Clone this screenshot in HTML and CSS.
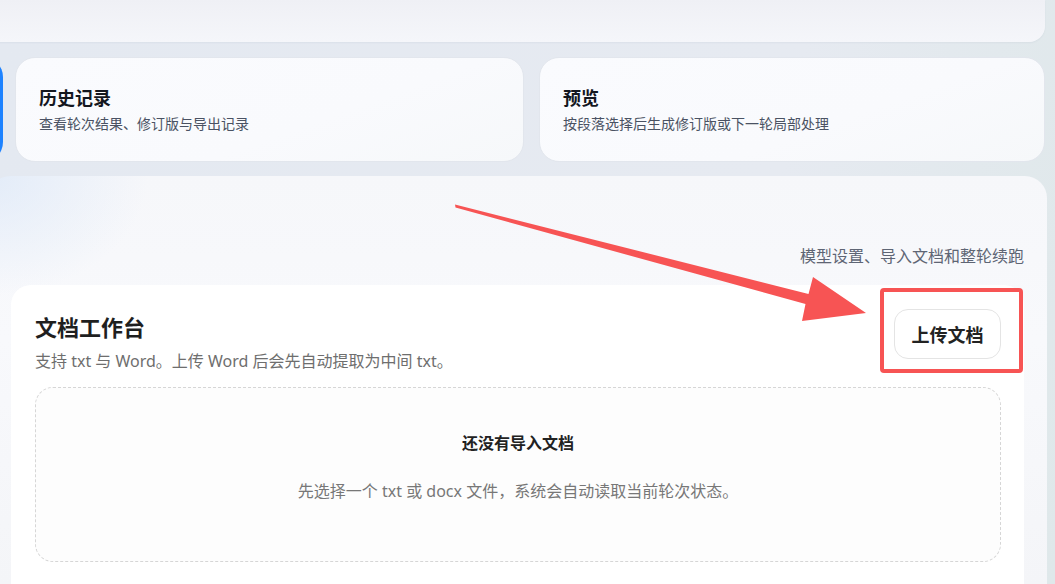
FILE: index.html
```html
<!DOCTYPE html>
<html lang="zh-CN">
<head>
    <meta charset="utf-8">
    <title>文档工作台</title>
    <link rel="stylesheet" href="styles.css">
</head>
<body>
    <div class="page">
        <div class="topbar"></div>

        <div class="tabs">
            <div class="tab tab-active"></div>
            <div class="tab">
                <h3>历史记录</h3>
                <p>查看轮次结果、修订版与导出记录</p>
            </div>
            <div class="tab">
                <h3>预览</h3>
                <p>按段落选择后生成修订版或下一轮局部处理</p>
            </div>
        </div>

        <section class="panel">
            <div class="panel-note">模型设置、导入文档和整轮续跑</div>
            <div class="workbench">
                <div class="wb-head">
                    <div class="wb-title">
                        <h2>文档工作台</h2>
                        <p>支持 txt 与 Word。上传 Word 后会先自动提取为中间 txt。</p>
                    </div>
                    <button class="upload" type="button">上传文档</button>
                </div>
                <div class="empty">
                    <h4>还没有导入文档</h4>
                    <p>先选择一个 txt 或 docx 文件，系统会自动读取当前轮次状态。</p>
                </div>
            </div>
        </section>
    </div>

    <!-- annotation layer: arrow + box around the upload button -->
    <svg class="markup" width="1055" height="584" viewBox="0 0 1055 584">
        <polygon fill="#f75454" points="455,204.5 808.5,294 813,277 866,313 802,321 805.5,304 455.5,207.5"/>
        <rect x="882" y="290" width="139" height="81" rx="2" fill="none" stroke="#f75454" stroke-width="4"/>
    </svg>
</body>
</html>
```

FILE: styles.css
```css
body {
    margin: 0;
    height: 584px;
    overflow: hidden;
    position: relative;
    font-family: "Noto Sans", "Noto Sans CJK SC", sans-serif;
    color: #1d1f24;
    background: linear-gradient(100deg, #e4e9f1 0%, #e6eaf1 70%, #dfe8ea 100%);
}

.page {
    display: flex;
    flex-direction: column;
    height: 584px;
}

.topbar {
    height: 42px;
    margin: 0 10px 0 -20px;
    border-radius: 0 0 16px 16px;
    background: linear-gradient(180deg, #eff0f5 0%, #f5f6fa 100%);
    box-shadow: 0 1px 2px rgba(40, 60, 90, 0.05);
}

.tabs {
    display: flex;
    gap: 15px;
    height: 105px;
    margin: 15px 10px 0 0;
}

.tab {
    box-sizing: border-box;
    width: 509px;
    flex: none;
    padding: 27px 23px 0;
    border-radius: 20px;
    border: 1px solid #e2e6ed;
    background: linear-gradient(160deg, #fafbfe 0%, #f9fafd 60%, #f6f8fa 100%);
}

.tab + .tab + .tab {
    width: 506px;
}

.tab-active {
    width: 200px;
    margin: 0 -3px 0 -197px;
    border: none;
    background: #1d82ff;
}

.tab h3 {
    margin: 0;
    font-size: 18px;
    line-height: 26px;
    font-weight: 700;
    color: #14171f;
}

.tab p {
    margin: 2px 0 0;
    font-size: 14px;
    line-height: 22px;
    color: #4a5263;
}

.panel {
    flex: 1;
    margin: 14px 8px 0 -12px;
    padding: 68px 23px 0;
    border-radius: 22px 22px 0 0;
    background:
        radial-gradient(ellipse 160px 120px at 0 0, rgba(222, 233, 248, 0.8) 0, rgba(247, 248, 251, 0) 100%),
        linear-gradient(180deg, #f6f7fa 0%, #f8f9fc 40%, #f4f5f8 100%);
    display: flex;
    flex-direction: column;
}

.panel-note {
    text-align: right;
    font-size: 16px;
    line-height: 24px;
    color: #5e6574;
}

.workbench {
    flex: 1;
    margin-top: 17px;
    padding: 24px 23px 0 24px;
    border-radius: 20px 20px 0 0;
    background: #fff;
}

.wb-head {
    display: flex;
    justify-content: space-between;
    align-items: flex-start;
}

.wb-title h2 {
    margin: 3px 0 0;
    font-size: 22px;
    line-height: 30px;
    font-weight: 700;
    color: #1f1f1f;
}

.wb-title p {
    margin: 8px 0 0;
    font-size: 16px;
    line-height: 22px;
    color: #6e6e6e;
}

.upload {
    width: 107px;
    height: 50px;
    border: 1px solid #e4e4e4;
    border-radius: 14px;
    background: #fff;
    font-family: inherit;
    font-size: 18px;
    font-weight: 700;
    color: #222;
    cursor: pointer;
}

.empty {
    height: 175px;
    box-sizing: border-box;
    margin-top: 15px;
    padding-top: 43px;
    border: 1px dashed #d6d6d6;
    border-radius: 18px;
    background: #fdfdfd;
    text-align: center;
}

.empty h4 {
    margin: 0;
    font-size: 16px;
    line-height: 24px;
    font-weight: 700;
    color: #222;
}

.empty p {
    margin: 24px 0 0;
    font-size: 16px;
    line-height: 24px;
    color: #777;
}

.markup {
    position: absolute;
    top: 0;
    left: 0;
    pointer-events: none;
}
```
